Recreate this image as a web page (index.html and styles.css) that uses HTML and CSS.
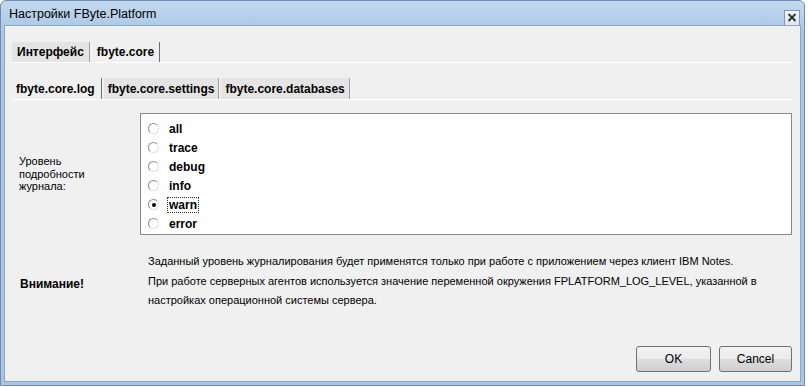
FILE: index.html
```html
<!DOCTYPE html>
<html lang="ru">
<head>
  <meta charset="UTF-8">
  <title>Настройки FByte.Platform</title>
  <link rel="stylesheet" href="styles.css">
</head>
<body>
  <div class="window">
    <div class="titlebar">
      <span class="title">Настройки FByte.Platform</span>
      <span class="close-btn">
        <svg width="10" height="9" viewBox="0 0 10 9"><path d="M1.5 1 L8.5 8 M8.5 1 L1.5 8" stroke="#333" stroke-width="2" fill="none"/></svg>
      </span>
    </div>
    <div class="client">
      <div class="tabs">
        <span class="tab">Интерфейс</span>
        <span class="tab active">fbyte.core</span>
      </div>
      <div class="panel">
        <div class="tabs">
          <span class="tab active">fbyte.core.log</span>
          <span class="tab">fbyte.core.settings</span>
          <span class="tab">fbyte.core.databases</span>
        </div>
        <div class="subpanel">
          <div class="field">
            <div class="field-label">Уровень<br>подробности<br>журнала:</div>
            <div class="listbox">
              <div class="radio-row"><span class="radio"></span><span class="radio-label">all</span></div>
              <div class="radio-row"><span class="radio"></span><span class="radio-label">trace</span></div>
              <div class="radio-row"><span class="radio"></span><span class="radio-label">debug</span></div>
              <div class="radio-row"><span class="radio"></span><span class="radio-label">info</span></div>
              <div class="radio-row"><span class="radio checked"></span><span class="radio-label focus">warn</span></div>
              <div class="radio-row"><span class="radio"></span><span class="radio-label">error</span></div>
            </div>
          </div>
          <div class="note">
            <div class="note-title">Внимание!</div>
            <div class="note-text">
              <p>Заданный уровень журналирования будет применятся только при работе с приложением через клиент IBM Notes.</p>
              <p>При работе серверных агентов используется значение переменной окружения FPLATFORM_LOG_LEVEL, указанной в настройках операционной системы сервера.</p>
            </div>
          </div>
          <div class="buttons">
            <button class="btn">OK</button>
            <button class="btn">Cancel</button>
          </div>
        </div>
      </div>
    </div>
  </div>
</body>
</html>
```

FILE: styles.css
```css
body {
  margin: 0;
  background: #fff;
  font-family: "Liberation Sans", Arial, sans-serif;
  color: #000;
}
.window {
  width: 805px;
  height: 386px;
  box-sizing: border-box;
  border: 1px solid #6f8db3;
  border-radius: 6px 6px 0 0;
  background: linear-gradient(#c4d9ef, #aac6e4 30px, #a9c5e3);
  padding: 0 3px 3px 3px;
  display: flex;
  flex-direction: column;
}
.titlebar {
  height: 24px;
  display: flex;
  align-items: center;
  justify-content: space-between;
  padding: 0 2px 0 5px;
}
.title {
  font-size: 12.5px;
  color: #000;
  margin-top: 1px;
}
.close-btn {
  width: 16px;
  height: 16px;
  box-sizing: border-box;
  margin-top: 9px;
  margin-right: -1px;
  border: 1px solid #7e96b4;
  background: linear-gradient(#f5f8fc, #dce6f2);
  display: flex;
  align-items: center;
  justify-content: center;
}
.client {
  flex: 1;
  background: #f0f0f0;
  border: 1px solid #8aa6c6;
  padding: 16px 7px 0 7px;
  display: flex;
  flex-direction: column;
}
.tabs {
  display: flex;
  gap: 2px;
  height: 20px;
}
.tab {
  display: flex;
  align-items: center;
  padding: 0 5px;
  font-size: 12px;
  font-weight: bold;
  background: #e4e4e4;
  border-right: 1px solid #a0a0a0;
  box-sizing: border-box;
}
.tab.active {
  background: #f0f0f0;
  border-right: 1px solid #707070;
}
.panel {
  flex: 1;
  border-top: 1px solid #fff;
  margin-right: 1px;
  padding-top: 15px;
  display: flex;
  flex-direction: column;
}
.panel .tabs {
  height: 21px;
}
.panel .tab {
  padding: 0 4px;
}
.panel .tab.active {
  padding: 0 6px 0 4px;
}
.subpanel {
  flex: 1;
  border-top: 1px solid #fff;
  display: flex;
  flex-direction: column;
}
.field {
  display: flex;
  align-items: center;
  margin-top: 13px;
}
.field-label {
  width: 128px;
  padding-left: 7px;
  box-sizing: border-box;
  font-size: 11px;
  line-height: 12.5px;
}
.listbox {
  flex: 1;
  height: 122px;
  box-sizing: border-box;
  background: #fff;
  border: 1px solid #8a8a8a;
  padding: 5px 0 0 7px;
}
.radio-row {
  height: 19px;
  display: flex;
  align-items: center;
}
.radio {
  width: 11px;
  height: 11px;
  box-sizing: border-box;
  border-radius: 50%;
  border: 1px solid;
  border-color: #8c8c8c #e0e0e0 #e0e0e0 #8c8c8c;
  background: #fff;
  margin-right: 8px;
  display: flex;
  align-items: center;
  justify-content: center;
}
.radio.checked::after {
  content: "";
  width: 4px;
  height: 4px;
  border-radius: 50%;
  background: #000;
}
.radio-label {
  font-size: 12px;
  font-weight: bold;
  padding: 0 1px;
  border: 1px dotted transparent;
}
.radio-label.focus {
  border-color: #333;
}
.note {
  display: flex;
  align-items: center;
  margin-top: 17px;
}
.note-title {
  width: 136px;
  padding-left: 8px;
  padding-top: 5px;
  box-sizing: border-box;
  font-size: 12px;
  font-weight: bold;
}
.note-text {
  font-size: 11px;
  line-height: 19.5px;
  width: 620px;
}
.note-text p {
  margin: 0;
}
.buttons {
  margin-top: auto;
  margin-bottom: 9px;
  display: flex;
  justify-content: flex-end;
  gap: 9px;
}
.btn {
  width: 75px;
  height: 26px;
  font-family: "Liberation Sans", Arial, sans-serif;
  font-size: 12px;
  background: linear-gradient(#f2f2f2, #ebebeb 50%, #dddddd 51%, #cfcfcf);
  border: 1px solid #707070;
  border-radius: 3px;
  color: #000;
}
.btn:first-child {
  margin-right: -1px;
}
.btn:last-child {
  width: 73px;
}
```
